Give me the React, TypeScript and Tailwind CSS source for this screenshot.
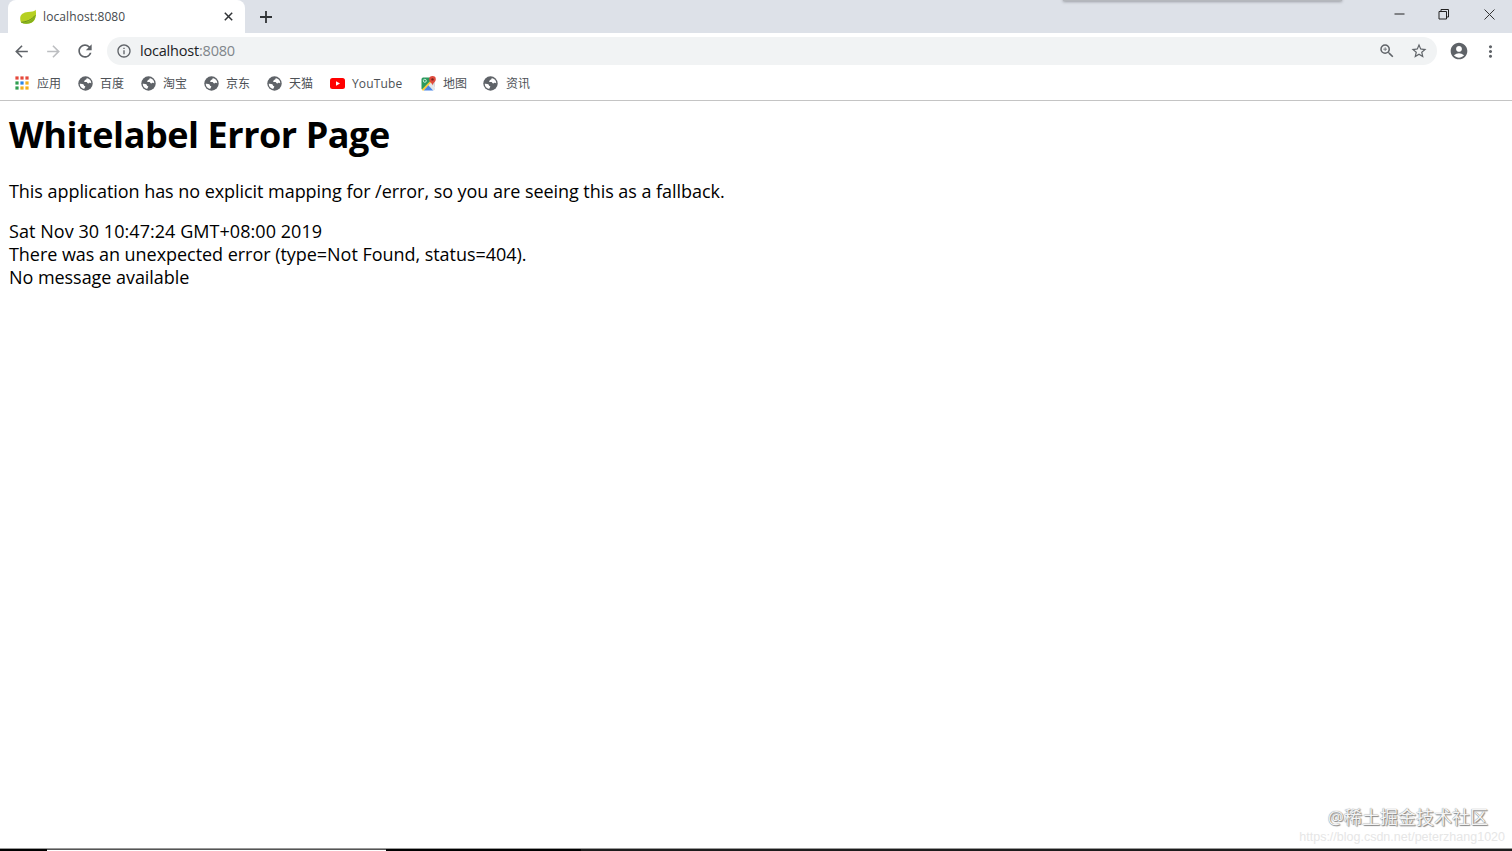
import type { ReactNode } from 'react';
import {
  MdAccountCircle,
  MdArrowBack,
  MdArrowForward,
  MdInfoOutline,
  MdMoreVert,
  MdRefresh,
  MdStarBorder,
  MdZoomIn,
} from 'react-icons/md';

function LeafIcon() {
  return (
    <svg className="w-4 h-4" viewBox="0 0 16 16">
      <path d="M15.600.8C14 2.800 11.500 2.800 8 3 3.500 3.400.2 5.500.2 9.200c0 1.800.3 3.300 1.200 4.600C4 15 8 15 11 14c4.200-1.500 5.900-7 4.600-13.200z" fill="#b6d021" />
      <path d="M1.400 13.800c5-.2 10.200-1.800 14.200-7-.6 4.200-2.600 6.300-5 7.200-2.700 1-6.500 1-9.200-.2z" fill="#83b01c" />
      <path d="M1.200 13.300C6 13 11.500 11 15.500 6.200" stroke="#54801a" strokeWidth=".8" fill="none" />
    </svg>
  );
}

function GlobeIcon() {
  return (
    <svg className="w-[15px] h-[15px]" viewBox="0 0 15 15">
      <circle cx="7.500" cy="7.500" r="7.200" fill="#5f6368" />
      <path d="M8.600 2c.4.900-.2 1.400-1.100 1.700-.8.300-.7.900-1.200 1.200-.4.300-.1.900.4 1l1.800.2c.8.200.7 1.100 1.500 1.300.9.200 1.200-.8 2-.7.600.1.700.6 1.300.6A5.700 5.700 0 0 0 8.600 2z" fill="#fff" />
      <path d="M1.700 7.700c1.200-.2 2.700 0 3.600.6.800.6.400 1.400 1.300 1.700.8.300.9.900.3 1.400-.4.400-.6.900-.7 1.600a5.800 5.800 0 0 1-4.500-5.300z" fill="#fff" />
    </svg>
  );
}

function AppsIcon() {
  const colors = [
    '#e5483b', '#e5483b', '#e5483b',
    '#2f9e50', '#2a86e8', '#f2b01e',
    '#2f9e50', '#f2b01e', '#f2b01e',
  ];
  return (
    <svg className="w-[14px] h-[14px]" viewBox="0 0 14 14">
      {colors.map((c, i) => (
        <rect key={i} x={(i % 3) * 5 + 0.4} y={Math.floor(i / 3) * 5 + 0.4} width="3.200" height="3.200" fill={c} />
      ))}
    </svg>
  );
}

function YouTubeIcon() {
  return (
    <svg className="w-[15px] h-[11px]" viewBox="0 0 15 11">
      <rect width="15" height="11" rx="2.500" fill="#f00" />
      <path d="M6 3.200v4.600l4-2.300z" fill="#fff" />
    </svg>
  );
}

function MapsIcon() {
  return (
    <svg className="w-[15px] h-[15px]" viewBox="0 0 15 15">
      <path d="M1.800 1.500h8l1 3.500-9 9-1.300-1V2.800z" fill="#2b9a5e" />
      <path d="M9.500 6 14 11.500V5z" fill="#d6d9dd" />
      <path d="M.8 13.500 9 5.200l1.500 1.600L3 14.500H1.500z" fill="#fbcb3d" />
      <path d="M2.800 14.500 7.500 9.300l5 5.200z" fill="#4a86e8" />
      <path d="m7.500 9.300 2.200-2.400 4.300 4.800v2l-1.500.8z" fill="#e4e7ea" />
      <circle cx="3.800" cy="4.800" r="1.500" fill="none" stroke="#d9f0e2" strokeWidth=".9" />
      <path d="M11.500 0a3.300 3.300 0 0 1 3.300 3.400c0 2.400-2.700 3-3.300 6.200-.6-3.200-3.300-3.800-3.300-6.200A3.300 3.300 0 0 1 11.500 0z" fill="#df4b3e" />
      <circle cx="11.500" cy="3.400" r="1.200" fill="#7c231c" />
    </svg>
  );
}

function Bookmark({ icon, label, className }: { icon: ReactNode; label: string; className: string }) {
  return (
    <div className={`flex items-center shrink-0 ${className}`}>
      {icon}
      <span className="whitespace-nowrap pt-[1px]">{label}</span>
    </div>
  );
}

export default function App() {
  return (
    <div className="relative flex flex-col w-[1512px] h-[851px] overflow-hidden bg-white font-['Open_Sans','Noto_Sans_CJK_SC',sans-serif]">
      {/* Tab strip */}
      <div className="flex h-[33px] shrink-0 bg-[#dde1e8] pl-2">
        <div className="flex items-center w-[237px] bg-white rounded-t-lg pl-3 pr-[12px]">
          <LeafIcon />
          <span className="ml-[7px] pt-[1px] flex-1 text-[12px] tracking-[0.1px] text-[#45494d]">localhost:8080</span>
          <svg className="w-[9px] h-[9px]" viewBox="0 0 9 9">
            <path d="m.8.8 7.400 7.400m0-7.400L.8 8.200" stroke="#303336" strokeWidth="1.500" />
          </svg>
        </div>
        <div className="flex items-center pl-[15px]">
          <svg className="w-3 h-3" viewBox="0 0 12 12">
            <path d="M6 0v12M0 6h12" stroke="#303336" strokeWidth="1.800" />
          </svg>
        </div>
        <div className="flex ml-auto pr-[16px] pt-[8px] gap-[33px]">
          <svg className="w-3 h-3" viewBox="0 0 12 12"><path d="M1.500 6h10" stroke="#222" /></svg>
          <svg className="w-3 h-3" viewBox="0 0 12 12" fill="none" stroke="#222">
            <path d="M1 3.500h7.500V11H1zM3 3.500v-2h7.500V9h-2" />
          </svg>
          <svg className="w-[13px] h-[13px]" viewBox="0 0 13 13"><path d="m1.500 1.500 10 10m0-10-10 10" stroke="#333" /></svg>
        </div>
      </div>

      {/* Toolbar */}
      <div className="flex items-center h-[36px] shrink-0 pl-[12px] pr-[12px] text-[#5f6368]">
        <MdArrowBack className="w-[19px] h-[19px] shrink-0" />
        <MdArrowForward className="w-[19px] h-[19px] shrink-0 ml-[13px] text-[#bcbec1]" />
        <MdRefresh className="w-[20px] h-[20px] shrink-0 ml-[12px]" />
        <div className="flex items-center h-[28px] flex-1 ml-[12px] bg-[#f1f3f4] rounded-full pl-[9px] pr-[9px]">
          <MdInfoOutline className="w-4 h-4" />
          <span className="ml-[8px] text-[14.5px] tracking-[-0.2px] text-[#202124]">
            localhost<span className="text-[#80868b]">:8080</span>
          </span>
          <MdZoomIn className="w-[18px] h-[18px] ml-auto" />
          <MdStarBorder className="w-[18px] h-[18px] ml-[14px]" />
        </div>
        <MdAccountCircle className="w-5 h-5 shrink-0 ml-3" />
        <MdMoreVert className="w-[19px] h-[19px] shrink-0 ml-[12px]" />
      </div>

      {/* Bookmarks bar */}
      <div className="flex items-center h-[32px] shrink-0 pb-[3px] pl-[15px] text-[12px] text-[#4d5156] border-b border-[#c4c4c4]">
        <Bookmark icon={<AppsIcon />} label="应用" className="gap-2 w-[63px]" />
        <Bookmark icon={<GlobeIcon />} label="百度" className="gap-[7px] w-[63px]" />
        <Bookmark icon={<GlobeIcon />} label="淘宝" className="gap-[7px] w-[63px]" />
        <Bookmark icon={<GlobeIcon />} label="京东" className="gap-[7px] w-[63px]" />
        <Bookmark icon={<GlobeIcon />} label="天猫" className="gap-[7px] w-[63px]" />
        <Bookmark icon={<YouTubeIcon />} label="YouTube" className="gap-[7px] w-[91px] tracking-[0.15px]" />
        <Bookmark icon={<MapsIcon />} label="地图" className="gap-[7px] w-[62px]" />
        <Bookmark icon={<GlobeIcon />} label="资讯" className="gap-2 w-[63px]" />
      </div>

      {/* Page */}
      <main className="flex-1 pl-[9px] text-black text-[18px] leading-[23px]">
        <h1 className="mt-[10px] text-[36px] leading-[48px] tracking-[-0.45px] font-bold whitespace-nowrap">Whitelabel Error Page</h1>
        <p className="mt-[21px] tracking-[-0.05px]">This application has no explicit mapping for /error, so you are seeing this as a fallback.</p>
        <div className="mt-[17px] tracking-[0.05px]">Sat Nov 30 10:47:24 GMT+08:00 2019</div>
        <div className="tracking-[-0.04px]">There was an unexpected error (type=Not Found, status=404).</div>
        <div className="tracking-[-0.05px]">No message available</div>
      </main>

      {/* Taskbar edge */}
      <div className="flex h-[3px] shrink-0 bg-black border-t border-[#999]">
        <div className="w-[339px] ml-[47px] border-t border-[#555] bg-white" />
        <div className="w-[931px] ml-[195px] bg-[#1c1c1c]" />
      </div>

      {/* Window shadow and watermarks */}
      <div className="absolute top-[-4px] left-[1063px] w-[279px] h-[5px] bg-[#b4b7bc] shadow-[0_1px_3px_#9da0a6]" />
      <div className="absolute right-[24px] bottom-[22px] text-[18px] leading-6 text-[#f4f4f4] [text-shadow:0_0_1px_#666,1px_1px_1px_#888] whitespace-nowrap">@稀土掘金技术社区</div>
      <div className="absolute right-[7px] bottom-[5px] font-['Liberation_Sans',sans-serif] text-[12.5px] leading-[18px] text-[#e6e6e6] whitespace-nowrap">https://blog.csdn.net/peterzhang1020</div>
    </div>
  );
}
